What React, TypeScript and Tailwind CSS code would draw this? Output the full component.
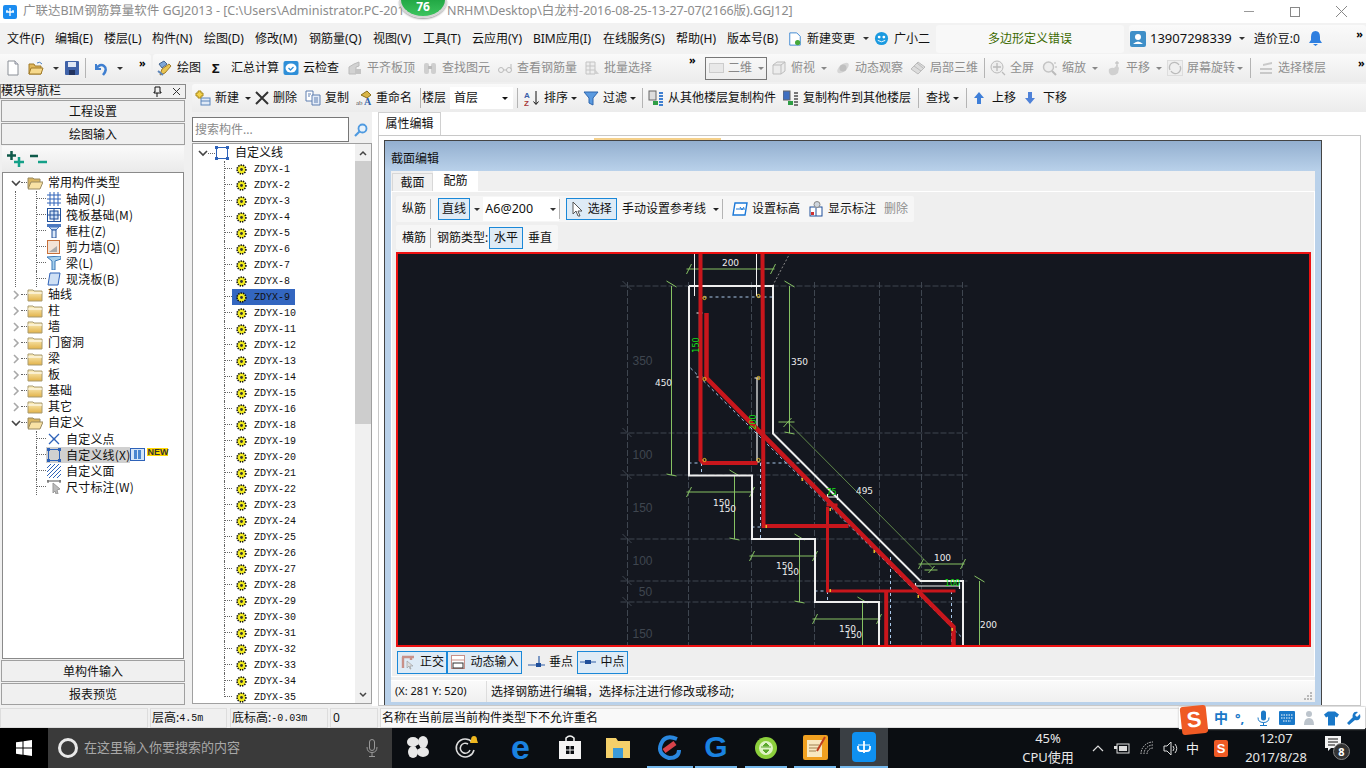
import React from 'react';

const cx = (...a: (string | false | undefined)[]) => a.filter(Boolean).join(' ');

const Svg = ({ c = 'w-4 h-4', v = '0 0 16 16', children }: { c?: string; v?: string; children?: React.ReactNode }) => (
  <svg viewBox={v} className={cx('shrink-0', c)}>{children}</svg>
);

const Caret = ({ c = 'text-[#333]' }: { c?: string }) => (
  <svg viewBox="0 0 6 3" className={cx('w-[6px] h-[3px] shrink-0', c)}><path d="M0 0h6L3 3z" fill="currentColor" /></svg>
);

const More = () => <span className="text-[11px] font-bold leading-none text-black tracking-[-1px]">»</span>;

const Sep = ({ w = 'w-[8px]' }: { w?: string }) => (
  <div className={cx('h-full flex items-center shrink-0', w)}><div className="w-px h-[20px] bg-[#b4b4b4]" /></div>
);

const Tool = ({ w, icon, label, gray, caret, caretGap = 'ml-[6px]' }: { w: string; icon?: React.ReactNode; label?: string; gray?: boolean; caret?: boolean; caretGap?: string }) => (
  <div className={cx('flex items-center h-full shrink-0 whitespace-nowrap', w, gray ? 'text-[#8e8e8e]' : 'text-[#111]')}>
    {icon}
    {label && <span className={icon ? 'ml-[4px]' : ''}>{label}</span>}
    {caret && <span className={caretGap}><Caret c={gray ? 'text-[#888]' : 'text-[#222]'} /></span>}
  </div>
);

/* ---------- icons ---------- */
const IcoNewFile = () => <Svg><path d="M3 1h7l3 3v11H3z" fill="#fff" stroke="#8a8f96" /><path d="M10 1v3h3" fill="#dde" stroke="#8a8f96" /></Svg>;
const IcoOpen = () => <Svg><path d="M1 4h5l1 2h6v8H1z" fill="#e0b75a" stroke="#a07a28" /><path d="M3 8h12l-2 6H1z" fill="#f6d98c" stroke="#a07a28" /><path d="M9 3q3-2 5 1" fill="none" stroke="#4a7fc0" /></Svg>;
const IcoSave = () => <Svg><rect x="1" y="1" width="14" height="14" fill="#3f62a8" rx="1" /><rect x="4" y="2" width="8" height="5" fill="#dfe7f5" /><rect x="5" y="10" width="6" height="5" fill="#22335f" /></Svg>;
const IcoUndo = () => <Svg><path d="M3 4v5h5" fill="none" stroke="#3f7fd0" strokeWidth="2" /><path d="M3 9q4-6 8-3t-1 9" fill="none" stroke="#3f7fd0" strokeWidth="2.5" /></Svg>;
const IcoDraw = () => <Svg><path d="M2 4l5-3 3 3-5 4z" fill="#7fa7d8" stroke="#46658f" /><path d="M5 9l7-5 2 2-6 7-5 2z" fill="#e9c552" stroke="#a07a28" /><path d="M1 11l5 4" stroke="#5f86b8" strokeWidth="2" /></Svg>;
const IcoCloud = () => <Svg><rect x="0.5" y="1" width="15" height="14" rx="2" fill="#2f8fd8" /><ellipse cx="8" cy="8" rx="5.5" ry="4.5" fill="#fff" /><path d="M5.5 8l2 2 3-3" fill="none" stroke="#2f8fd8" strokeWidth="1.3" /></Svg>;
const IcoGrayBoxes = () => <Svg><path d="M2 14V7l5-3 5-2v4l-3 1v7z" fill="#d2d2d2" stroke="#bbb" /><rect x="8" y="9" width="6" height="5" fill="#c4c4c4" /></Svg>;
const IcoBinoc = () => <Svg><rect x="2" y="3" width="5" height="11" rx="2" fill="#cfcfcf" /><rect x="9" y="3" width="5" height="11" rx="2" fill="#cfcfcf" /><rect x="6" y="6" width="4" height="3" fill="#bbb" /></Svg>;
const IcoGlasses = () => <Svg><circle cx="4" cy="10" r="2.5" fill="none" stroke="#bbb" /><circle cx="12" cy="10" r="2.5" fill="none" stroke="#bbb" /><path d="M6.5 10h3M14 9V4" stroke="#bbb" /></Svg>;
const IcoBatch = () => <Svg><path d="M2 2h9v12H2zM2 6h9M2 10h9M6 2v12" fill="#eee" stroke="#c4c4c4" /><path d="M10 8l5 6h-4z" fill="#d0d0d0" /></Svg>;
const IcoCube = () => <Svg><path d="M2 5l4-3h8v9l-4 3H2z" fill="#ececec" stroke="#bdbdbd" /><path d="M2 5h8v9M10 5l4-3" fill="none" stroke="#bdbdbd" /></Svg>;
const IcoOrbit = () => <Svg><ellipse cx="8" cy="8" rx="7" ry="3.5" transform="rotate(-40 8 8)" fill="#d6d6d6" /><circle cx="8" cy="8" r="3.5" fill="#c0c0c0" /></Svg>;
const IcoBox3 = () => <Svg><path d="M1 9l7-7 7 5-7 7z" fill="#dcdcdc" stroke="#bbb" /><path d="M4 6l7 5M7 3l6 5" stroke="#bbb" /></Svg>;
const IcoZoomFit = () => <Svg><circle cx="7" cy="7" r="6" fill="#eee" stroke="#bbb" /><path d="M7 3v8M3 7h8M12 12l3 3" stroke="#bbb" strokeWidth="1.3" /></Svg>;
const IcoZoom = () => <Svg><circle cx="6.5" cy="7" r="5" fill="#eee" stroke="#c4c4c4" strokeWidth="1.5" /><path d="M10 11l4 4" stroke="#bbb" strokeWidth="2" /><circle cx="13" cy="3" r="1" fill="#ccc" /><circle cx="14" cy="7" r="1" fill="#ccc" /></Svg>;
const IcoHand = () => <Svg><path d="M3 9q3-2 5-1l3-3 2 3-1 5q-3 3-7 2-3-2-2-6z" fill="#d0d0d0" /><path d="M11 1v5M9 3h4" stroke="#bbb" /></Svg>;
const IcoRotate = () => <Svg><rect x="0.5" y="0.5" width="15" height="15" fill="#efefef" stroke="#ddd" /><path d="M3 10a5 5 0 0 1 9-5M13 6a5 5 0 0 1-9 5" fill="none" stroke="#bbb" strokeWidth="1.4" /></Svg>;
const IcoFloors = () => <Svg><path d="M5 4l9-2v2l-9 2zM2 8h12v2H2zM2 12h12v2H2z" fill="#c9c9c9" /></Svg>;
const IcoNewPlus = () => <Svg><rect x="6" y="8" width="9" height="7" fill="#dfe9f6" stroke="#5d86bb" /><path d="M6 11h9" stroke="#5d86bb" /><path d="M3 1h3v2h2v3H6v2H3V6H1V3h2z" fill="#f4d24a" stroke="#a8881a" /></Svg>;
const IcoCopy = () => <Svg><path d="M1 1h7v10H1z" fill="#fff" stroke="#5f7fb0" /><path d="M7 5h8v10H7z" fill="#e4ecf8" stroke="#5f7fb0" /><path d="M9 8h4M9 10h4M9 12h4M3 4h3M3 6h2" stroke="#5f7fb0" /></Svg>;
const IcoRename = () => <Svg><path d="M5 5l6-4 4 4-4 3z" fill="#d9b648" stroke="#8a6f1a" /><text x="0" y="15" fontSize="7" fill="#555" fontFamily="Liberation Serif">ab</text><text x="8" y="15" fontSize="10" fontWeight="700" fill="#2f5fa8" fontFamily="Liberation Serif">A</text></Svg>;
const IcoSort = () => <Svg><text x="0" y="7.5" fontSize="8" fontWeight="700" fill="#3a5fa8" fontFamily="Liberation Sans">A</text><text x="0" y="15.5" fontSize="8" fontWeight="700" fill="#a83a3a" fontFamily="Liberation Sans">Z</text><path d="M12 1v13M9.5 11.5l2.5 3 2.5-3" fill="none" stroke="#111" /></Svg>;
const IcoFilter = () => <Svg><path d="M1 2h14L10 8v7l-4-2V8z" fill="#5a9ae0" stroke="#2f66ad" /></Svg>;
const IcoCopyFrom = ({ flip }: { flip?: boolean }) => <Svg><rect x={flip ? 0 : 1} y="1" width="7" height="9" fill={flip ? '#3f6fc0' : '#ddd'} stroke="#666" /><rect x="5" y="11" width="5" height="4" fill="#2f9e45" /><path d="M11 3h4M11 6h4M11 9h4M11 12h4M11 15h4" stroke={flip ? '#777' : '#3f7fd0'} strokeWidth="2" /></Svg>;
const IcoUp = () => <Svg c="w-[10px] h-3" v="0 0 10 12"><path d="M5 0l5 6H7v6H3V6H0z" fill="#3f7fd8" /></Svg>;
const IcoDown = () => <Svg c="w-[10px] h-3" v="0 0 10 12"><path d="M5 12L0 6h3V0h4v6h3z" fill="#4f82d8" /></Svg>;
const IcoX = () => <Svg c="w-[14px] h-[14px]" v="0 0 14 14"><path d="M1 1l12 12M13 1L1 13" stroke="#333" strokeWidth="2" /></Svg>;
const IcoFolder = ({ open }: { open?: boolean }) => (
  <Svg c="w-4 h-[14px]" v="0 0 16 14">
    {open ? (
      <><path d="M1 2h5l1 1h6v9H1z" fill="#d8b560" stroke="#9a8a60" /><path d="M4 6h12l-3 7H1z" fill="#f8e2a4" stroke="#9a8a60" /></>
    ) : (
      <><path d="M1 2h5l1 1h8v10H1z" fill="url(#fg)" stroke="#a89a70" /><path d="M1 5h14" stroke="#fff" /></>
    )}
  </Svg>
);
const IcoGear = () => (
  <Svg c="w-[11px] h-[11px]" v="0 0 11 11">
    <circle cx="5.5" cy="5.5" r="4.4" fill="#f4ee20" stroke="#111" strokeWidth="1.6" strokeDasharray="1.4 1" />
    <circle cx="5.5" cy="5.5" r="1.4" fill="#333" />
  </Svg>
);
const IcoSquare = () => (
  <Svg c="w-[14px] h-[14px]" v="0 0 14 14">
    <rect x="1.5" y="1.5" width="11" height="11" fill="none" stroke="#2e62b8" />
    <path d="M0 0h3v3H0zM11 0h3v3h-3zM0 11h3v3H0zM11 11h3v3h-3z" fill="#2e62b8" />
  </Svg>
);
const Chev = ({ open }: { open?: boolean }) => (
  <svg viewBox="0 0 10 10" className="w-[10px] h-[10px] shrink-0">
    {open ? <path d="M1 3l4 4 4-4" fill="none" stroke="#444" strokeWidth="1.6" /> : <path d="M3 1l4 4-4 4" fill="none" stroke="#a8a8a8" strokeWidth="1.6" />}
  </svg>
);
const KIcons: Record<string, React.ReactNode> = {
  grid: <Svg c="w-[14px] h-[14px]" v="0 0 14 14"><path d="M0 3h14M0 7h14M0 11h14M3 0v14M7 0v14M11 0v14" stroke="#2e62b8" /></Svg>,
  raft: <Svg c="w-[14px] h-[14px]" v="0 0 14 14"><rect x=".5" y=".5" width="13" height="13" fill="none" stroke="#1f4f9a" /><rect x="3" y="3" width="8" height="8" fill="#cfe0f5" stroke="#1f4f9a" /><path d="M7 0v14M0 7h14" stroke="#1f4f9a" /></Svg>,
  col: <Svg c="w-[14px] h-[14px]" v="0 0 14 14"><path d="M0 0h14v3H0z" fill="#4a78c0" /><path d="M2 3h10L9 6H5z" fill="#cfe0f5" stroke="#4a78c0" /><rect x="5" y="6" width="4" height="8" fill="#dbe8f8" stroke="#1f4f9a" /></Svg>,
  wall: <Svg c="w-[14px] h-[14px]" v="0 0 14 14"><rect x=".5" y=".5" width="12" height="13" fill="#f3e3d6" stroke="#c8703a" /><path d="M2 12l8-6v6z" fill="#aaa" /></Svg>,
  beam: <Svg c="w-[14px] h-[14px]" v="0 0 14 14"><path d="M0 1l14-1v3L8 5v9H5V5z" fill="#a8d0ec" stroke="#3a78b8" /></Svg>,
  slab: <Svg c="w-[14px] h-[14px]" v="0 0 14 14"><path d="M3 1h10l-2 12H1z" fill="#cfe0f5" stroke="#2e62b8" /></Svg>,
  point: <Svg c="w-[14px] h-[14px]" v="0 0 14 14"><path d="M2 2l10 10M12 2L2 12" stroke="#2e62b8" strokeWidth="1.3" /><circle cx="7" cy="7" r="1.3" fill="#2e62b8" /></Svg>,
  line: <IcoSquare />,
  area: <Svg c="w-[14px] h-[14px]" v="0 0 14 14"><path d="M0 4l4-4M0 8l8-8M0 12L12 0M2 14L14 2M6 14l8-8M10 14l4-4" stroke="#2e62b8" /></Svg>,
  dim: <Svg c="w-[14px] h-[14px]" v="0 0 14 14"><path d="M0 1h14M1 0v3M13 0v3" stroke="#555" /><path d="M6 3l7 6-3 1 1 4-2 0-1-3-2 2z" fill="#bbb" stroke="#999" /></Svg>,
};

const PageRow = ({ last, icon, label, sel, extra }: { last?: boolean; icon: string; label: string; sel?: boolean; extra?: React.ReactNode }) => (
  <div className="flex h-4 items-center whitespace-nowrap">
    <div className={cx('w-[10px] h-4 ml-[33px] border-l border-dotted border-[#666] shrink-0', last && 'h-2 self-start')}>
      <div className="h-2 border-b border-dotted border-[#666]" />
    </div>
    <div className={cx('flex items-center h-4 pl-px', sel && 'bg-[#d0d0d0]')}>
      {KIcons[icon]}
      <span className="ml-[5px] text-[12px] tracking-[0.2px] font-['Noto_Sans_CJK_SC','Liberation_Mono',monospace]">{label}</span>
    </div>
    {extra}
  </div>
);

const Folder = ({ label, open }: { label: string; open?: boolean }) => (
  <div className="flex h-4 items-center whitespace-nowrap">
    <div className="w-[10px] ml-[8px] flex justify-center"><Chev open={open} /></div>
    <div className="w-[6px] border-b border-dotted border-[#666]" />
    <IcoFolder open={open} />
    <span className="ml-[5px] text-[12px]">{label}</span>
  </div>
);

const NavBtn = ({ label }: { label: string }) => (
  <div className="h-[22px] mx-[1px] mb-px pt-[2px] border border-[#a0a0a0] bg-[#f0f0f0] flex items-center justify-center text-[12px] text-[#111]">{label}</div>
);

const zdyx = [1, 2, 3, 4, 5, 6, 7, 8, 9, 10, 11, 12, 13, 14, 15, 16, 18, 19, 20, 21, 22, 23, 24, 25, 26, 27, 28, 29, 30, 31, 32, 33, 34, 35];

const menus: [string, string][] = [
  ['文件(F)', 'w-[48px]'], ['编辑(E)', 'w-[49px]'], ['楼层(L)', 'w-[48px]'], ['构件(N)', 'w-[52px]'], ['绘图(D)', 'w-[51px]'],
  ['修改(M)', 'w-[54px]'], ['钢筋量(Q)', 'w-[64px]'], ['视图(V)', 'w-[50px]'], ['工具(T)', 'w-[49px]'], ['云应用(Y)', 'w-[61px]'],
  ['BIM应用(I)', 'w-[70px]'], ['在线服务(S)', 'w-[73px]'], ['帮助(H)', 'w-[51px]'], ['版本号(B)', 'w-[61px]'],
];

/* ---------- section drawing ---------- */
const gridH = [286, 433, 475, 539, 581, 602];
const gridV = [627, 688, 751, 814, 879, 921, 962];
const gridLabels: [number, number, string][] = [[642, 365, '350'], [642, 459, '100'], [642, 512, '150'], [642, 565, '100'], [645, 596, '50'], [642, 638, '150']];
// x1 y1 x2 y2
const dimsH = [[688, 269, 772, 269], [688, 492, 751, 492], [751, 556, 814, 556], [814, 619, 878, 619], [920, 564, 962, 564]];
const dimsV = [[671, 286, 671, 475], [789, 286, 789, 433], [734, 475, 734, 539], [799, 539, 799, 602], [862, 602, 862, 647], [979, 581, 979, 647]];
const blueDash = [[703, 297, 772, 297], [690, 368, 962, 638], [688, 463, 800, 463], [701, 463, 701, 475], [760, 463, 760, 539], [751, 527, 763, 527], [814, 591, 827, 591], [827, 591, 827, 602], [890, 557, 890, 647], [951, 591, 951, 647], [763, 527, 785, 527]];
const whiteText: [number, number, string][] = [
  [730, 266, '200'], [663, 386, '450'], [799, 365, '350'], [864, 494, '495'], [721, 506, '150'], [727, 512, '150'],
  [784, 569, '150'], [790, 575, '150'], [847, 632, '150'], [853, 638, '150'], [942, 561, '100'], [988, 628, '200'],
];
const yellowDots: [number, number][] = [[704, 298], [758, 296], [704, 379], [758, 378], [704, 460], [758, 460]];
const yellowTicks: [number, number][] = [[801, 478], [829, 508], [873, 550], [917, 595], [951, 628], [765, 525], [829, 589]];

const SectionDrawing = () => (
  <svg viewBox="398 254 910 391" className="block w-full h-full">
    {gridH.map((y) => (
      <g key={y}>
        <line x1={620} y1={y} x2={967} y2={y} stroke="#3f4650" strokeDasharray="6 2" />
        <line x1={622} y1={y - 5} x2={631} y2={y + 4} stroke="#3f4650" />
      </g>
    ))}
    {gridV.map((x) => <line key={x} x1={x} y1={282} x2={x} y2={647} stroke="#3f4650" strokeDasharray="6 2" />)}
    {gridLabels.map(([x, y, t], i) => <text key={i} x={x} y={y} fontSize="12" fill="#3f464f" textAnchor="middle" fontFamily="Liberation Sans">{t}</text>)}
    <line x1={772} y1={286} x2={789} y2={254} stroke="#888" strokeDasharray="2 2" />
    {blueDash.map((d, i) => <line key={i} x1={d[0]} y1={d[1]} x2={d[2]} y2={d[3]} stroke="#a9c8ea" strokeDasharray="3 3" />)}
    {dimsH.map((d, i) => (
      <g key={i} stroke="#86c263">
        <line x1={d[0] - 2} y1={d[1]} x2={d[2] + 2} y2={d[3]} />
        <line x1={d[0] - 2} y1={d[1] + 5} x2={d[0] + 3} y2={d[1] - 5} />
        <line x1={d[2] - 2} y1={d[1] + 5} x2={d[2] + 3} y2={d[1] - 5} />
      </g>
    ))}
    {dimsV.map((d, i) => (
      <g key={i} stroke="#86c263">
        <line x1={d[0]} y1={d[1]} x2={d[2]} y2={d[3]} />
        <line x1={d[0] - 5} y1={d[1] - 5} x2={d[0] + 5} y2={d[1] + 1} />
        <line x1={d[0] - 5} y1={d[3] - 1} x2={d[0] + 5} y2={d[3] + 1} />
      </g>
    ))}
    <line x1={787} y1={422} x2={932} y2={568} stroke="#7fb75c" strokeWidth="0.7" />
    <path d="M778 422h16M783 427l8-9M924 570h13M928 573l6-7" stroke="#86c263" />

    <polyline points="688.5,286 772.5,286 772.5,433.5 920,581 962.5,581 962.5,647" fill="none" stroke="#eeeeee" strokeWidth="2" />
    <polyline points="688.5,286 688.5,475.5 751.5,475.5 751.5,539 814.5,539 814.5,602 878.5,602 878.5,647" fill="none" stroke="#eeeeee" strokeWidth="2" />
    <path d="M694 254v42M756 254v42" stroke="#f2f2f2" />
    <path d="M699 313v64M696 313h6M696 377h6M756.5 378v84M754 378h5M754 462h5M827 497h10M827 494v6M837 494v6M915 586h44M915 583v6M959 583v6" stroke="#f4f4f4" strokeWidth="1.2" fill="none" />

    <g fill="none" stroke="#c8161c" strokeWidth="4">
      <polyline points="700,254 700,460 703,463 757,463" />
      <polyline points="762,254 763,526 848,526" />
      <polyline points="706,313 706,378 953,627 953,647" strokeWidth="4.5" />
      <polyline points="827,507 827,591 955,591" strokeWidth="3" />
      <line x1={826} y1={505} x2={837} y2={505} strokeWidth="3" />
      <line x1={885.7} y1={592} x2={885.7} y2={647} />
    </g>
    {yellowDots.map(([x, y], i) => <circle key={i} cx={x} cy={y} r={1.6} fill="none" stroke="#e4bc2a" />)}
    {yellowTicks.map(([x, y], i) => <rect key={i} x={x} y={y} width={1.5} height={3} fill="#e4bc2a" />)}

    {whiteText.map(([x, y, t], i) => <text key={i} x={x} y={y} fontSize="9" fill="#ececec" textAnchor="middle" fontFamily="DejaVu Sans">{t}</text>)}
    <text x={831} y={495} fontSize="8" fill="#16e016" textAnchor="middle" fontFamily="DejaVu Sans">75</text>
    <text x={952} y={586} fontSize="8" fill="#16e016" textAnchor="middle" fontFamily="DejaVu Sans">100</text>
    <text fontSize="8" fill="#16e016" textAnchor="middle" fontFamily="DejaVu Sans" transform="translate(698 345) rotate(-90)">150</text>
    <text fontSize="8" fill="#16e016" textAnchor="middle" fontFamily="DejaVu Sans" transform="translate(755 422) rotate(-90)">200</text>
  </svg>
);

const HiBtn = ({ w, children }: { w: string; children: React.ReactNode }) => (
  <div className={cx('h-[22px] border border-[#1a88d8] bg-[#deebf6] flex items-center justify-center shrink-0 whitespace-nowrap', w)}>{children}</div>
);

const TaskSlot = ({ w = 'w-[48px]', on, active, children }: { w?: string; on?: boolean; active?: boolean; children: React.ReactNode }) => (
  <div className={cx('h-full flex items-center justify-center shrink-0 border-b-2', w, on ? 'border-[#76b9ed]' : 'border-transparent', active && 'bg-[#3a3f44]')}>{children}</div>
);

export default function App() {
  return (
    <div className="w-[1366px] h-[768px] overflow-hidden flex flex-col bg-[#f0f0f0] text-[12px] text-[#111] font-['Noto_Sans','Noto_Sans_CJK_SC',sans-serif]">
      <svg width="0" height="0" className="block h-0">
        <defs>
          <linearGradient id="fg" x1="0" y1="0" x2="0" y2="1"><stop offset="0" stopColor="#fdf2c4" /><stop offset="1" stopColor="#e2b248" /></linearGradient>
        </defs>
      </svg>

      {/* title bar */}
      <div className="h-[23px] bg-white flex items-center relative shrink-0">
        <div className="w-[14px] h-[14px] ml-[3px] mr-[6px] rounded-[2px] bg-[#1b8cf0] flex items-center justify-center">
          <Svg c="w-[10px] h-[10px]" v="0 0 10 10"><path d="M5 1v8M1 5h8M2 3v2M8 3v2" stroke="#fff" strokeWidth="1.3" fill="none" /></Svg>
        </div>
        <span className="w-[424px] shrink-0 text-[#8c8c8c] text-[12.5px] whitespace-nowrap">广联达BIM钢筋算量软件 GGJ2013 - [C:\Users\Administrator.PC-201</span>
        <span className="text-[#8c8c8c] text-[12.5px] tracking-[-0.08px] whitespace-nowrap">NRHM\Desktop\白龙村-2016-08-25-13-27-07(2166版).GGJ12]</span>
        {/* score badge over the title */}
        <div className="absolute left-[399px] top-0 w-[48px] h-[18px] rounded-b-[24px_18px] bg-linear-to-b from-[#22a845] to-[#3cc45e] border-2 border-t-0 border-[#d4d4d4] shadow-[0_1px_2px_#999] flex items-center justify-center text-white font-bold text-[12px] leading-none pb-[3px]">76</div>
        <div className="ml-auto mr-[2px] flex items-center h-full text-[#777]">
          <div className="w-[46px] flex justify-center"><div className="w-[10px] h-px bg-[#999]" /></div>
          <div className="w-[46px] flex justify-center"><div className="w-[10px] h-[10px] border border-[#888] bg-white" /></div>
          <div className="w-[46px] flex justify-center"><Svg c="w-[11px] h-[11px]" v="0 0 11 11"><path d="M0 0l11 11M11 0L0 11" stroke="#888" /></Svg></div>
        </div>
      </div>

      {/* menu bar */}
      <div className="h-[31px] flex items-center pl-[7px] shrink-0 bg-[#f2f2f2]">
        {menus.map(([m, w]) => <div key={m} className={cx('shrink-0 whitespace-nowrap', w)}>{m}</div>)}
        <div className="w-[86px] flex items-center">
          <Svg c="w-[14px] h-4"><path d="M2 1h8l4 4v10H2z" fill="#fff" stroke="#2f7fd0" /><circle cx="11" cy="12" r="3" fill="#47a83c" /></Svg>
          <span className="ml-[5px]">新建变更</span>
          <span className="ml-[8px]"><Caret /></span>
        </div>
        <div className="w-[62px] flex items-center">
          <Svg c="w-[15px] h-[15px]"><circle cx="8" cy="8" r="7" fill="#1b9ae0" /><circle cx="5.5" cy="6.5" r="1.5" fill="#fff" /><circle cx="10.5" cy="6.5" r="1.5" fill="#fff" /><path d="M4 10q4 3 8 0" stroke="#fff" fill="none" /></Svg>
          <span className="ml-[5px] whitespace-nowrap">广小二</span>
        </div>
        <div className="w-[188px] h-[28px] bg-[#f8f8f8] rounded-[3px] flex items-center justify-center text-[#3c6a00]">多边形定义错误</div>
        <div className="ml-[5px] flex-1 h-[28px] bg-linear-to-b from-[#fafafa] to-[#f0f0f0] rounded-[3px] flex items-center pl-[1px] pr-[4px]">
          <Svg c="w-4 h-4"><rect width="16" height="16" rx="2" fill="#3f8fc8" /><circle cx="8" cy="6" r="3" fill="#fff" /><path d="M3 13q5-5 10 0z" fill="#fff" /></Svg>
          <span className="ml-[4px] text-[13px]">13907298339</span>
          <span className="ml-[7px]"><Caret /></span>
          <span className="ml-[9px] whitespace-nowrap">造价豆:0</span>
          <Svg c="w-[13px] h-[15px] ml-[9px]" v="0 0 13 15"><path d="M6.5 0q4.5 0 4.5 6v3l2 3H0l2-3V6q0-6 4.5-6z" fill="#2f7fe0" /><path d="M4 13h5l-2.5 2z" fill="#2f7fe0" /></Svg>
          <span className="ml-auto self-start"><More /></span>
        </div>
      </div>

      {/* main toolbar */}
      <div className="h-[30px] flex shrink-0 pb-[2px]">
        <div className="w-[151px] h-full flex items-center pl-[5px] bg-linear-to-b from-[#fafafa] to-[#ececec] rounded-r-[3px]">
          <Tool w="w-[23px]" icon={<IcoNewFile />} />
          <Tool w="w-[25px]" icon={<IcoOpen />} />
          <Tool w="w-[11px]" icon={<Caret />} />
          <Tool w="w-[21px]" icon={<IcoSave />} />
          <Sep w="w-[8px]" />
          <Tool w="w-[24px]" icon={<IcoUndo />} />
          <Tool w="w-[22px]" icon={<Caret />} />
          <span className="self-start"><More /></span>
        </div>
        <div className="ml-[2px] flex-1 h-full flex items-center pl-[4px] bg-linear-to-b from-[#fafafa] to-[#ececec] rounded-l-[3px]">
          <Tool w="w-[54px]" icon={<IcoDraw />} label="绘图" />
          <Tool w="w-[72px]" icon={<span className="w-[11px] ml-[1px] mr-[4px] font-bold text-[13px] leading-none">Σ</span>} label="汇总计算" />
          <Tool w="w-[64px]" icon={<IcoCloud />} label="云检查" />
          <Tool w="w-[75px]" gray icon={<IcoGrayBoxes />} label="平齐板顶" />
          <Tool w="w-[75px]" gray icon={<IcoBinoc />} label="查找图元" />
          <Tool w="w-[87px]" gray icon={<IcoGlasses />} label="查看钢筋量" />
          <Tool w="w-[105px]" gray icon={<IcoBatch />} label="批量选择" />
          <div className="w-[16px] h-full flex items-start"><More /></div>
          <div className="w-[62px] h-[23px] border border-[#777] flex items-center pl-[3px] mr-[4px] text-[#888] shrink-0">
            <div className="w-[15px] h-[10px] border border-[#ccc] bg-[#e8e8e8]" />
            <span className="ml-[4px]">二维</span>
            <span className="ml-[6px]"><Caret c="text-[#888]" /></span>
          </div>
          <Tool w="w-[64px]" gray caret icon={<IcoCube />} label="俯视" />
          <Tool w="w-[75px]" gray icon={<IcoOrbit />} label="动态观察" />
          <Tool w="w-[74px]" gray icon={<IcoBox3 />} label="局部三维" />
          <Sep w="w-[6px]" />
          <Tool w="w-[52px]" gray icon={<IcoZoomFit />} label="全屏" />
          <Tool w="w-[64px]" gray caret icon={<IcoZoom />} label="缩放" />
          <Tool w="w-[61px]" gray caret icon={<IcoHand />} label="平移" />
          <Tool w="w-[83px]" gray caret caretGap="ml-[2px]" icon={<IcoRotate />} label="屏幕旋转" />
          <Sep w="w-[8px]" />
          <Tool w="w-[100px]" gray icon={<IcoFloors />} label="选择楼层" />
          <span className="self-start"><More /></span>
        </div>
      </div>

      {/* main area */}
      <div className="flex-1 flex min-h-0">
        {/* module navigator */}
        <div className="w-[186px] shrink-0 flex flex-col">
          <div className="h-[15px] mb-px border border-[#8a8a8a] flex items-center text-[12px] leading-none bg-[#f0f0f0] pr-[2px]">
            <span className="flex-1">模块导航栏</span>
            <Svg c="w-[9px] h-[11px] mr-[10px]" v="0 0 9 11"><path d="M2 1h5v5h1v1H1V6h1zM4 7v4" stroke="#111" fill="none" /></Svg>
            <Svg c="w-[9px] h-[9px] mr-[2px]" v="0 0 9 9"><path d="M1 1l7 7M8 1L1 8" stroke="#333" /></Svg>
          </div>
          <NavBtn label="工程设置" />
          <NavBtn label="绘图输入" />
          <div className="h-[26px] mx-[2px] bg-linear-to-b from-[#fafafa] to-[#eaeaea] flex items-center pl-[5px] gap-[6px]">
            <Svg c="w-[17px] h-4" v="0 0 17 16"><path d="M4.500 0v9M0 4.500h9" stroke="#0f5a4a" strokeWidth="2.500" /><path d="M12 6v10M7 11h10" stroke="#14a088" strokeWidth="2.500" /></Svg>
            <Svg c="w-[17px] h-4" v="0 0 17 16"><path d="M0 5h8" stroke="#0f5a4a" strokeWidth="2.500" /><path d="M8 11h9" stroke="#14a088" strokeWidth="2.500" /></Svg>
          </div>
          <div className="h-[488px] mx-[2px] mb-px border border-[#8a8a8a] bg-white pt-[2px] overflow-hidden">
            <Folder label="常用构件类型" open />
            <div className="relative">
              {/* long dotted trunk of the open folder */}
              <div className="absolute left-[12px] top-0 h-full border-l border-dotted border-[#666]" />
              <PageRow icon="grid" label="轴网(J)" />
              <PageRow icon="raft" label="筏板基础(M)" />
              <PageRow icon="col" label="框柱(Z)" />
              <PageRow icon="wall" label="剪力墙(Q)" />
              <PageRow icon="beam" label="梁(L)" />
              <PageRow icon="slab" label="现浇板(B)" last />
            </div>
            {['轴线', '柱', '墙', '门窗洞', '梁', '板', '基础', '其它'].map((f) => <Folder key={f} label={f} />)}
            <Folder label="自定义" open />
            <PageRow icon="point" label="自定义点" />
            <PageRow
              icon="line"
              label="自定义线(X)"
              sel
              extra={
                <>
                  <div className="w-[15px] h-[13px] border border-[#2e62b8] bg-[#d6e6f8] flex items-center justify-center gap-px">
                    <div className="w-[3px] h-[9px] bg-[#4a86d0]" /><div className="w-[3px] h-[9px] bg-[#4a86d0]" />
                  </div>
                  <span className="ml-[2px] -mt-[5px] text-[9px] leading-[8px] font-bold bg-[#ffd800] text-[#333] font-['Liberation_Sans',sans-serif]">NEW</span>
                </>
              }
            />
            <PageRow icon="area" label="自定义面" />
            <PageRow icon="dim" label="尺寸标注(W)" last />
          </div>
          <NavBtn label="单构件输入" />
          <NavBtn label="报表预览" />
        </div>

        {/* right of navigator */}
        <div className="ml-[6px] flex-1 flex flex-col min-w-0">
          <div className="h-[28px] shrink-0 flex items-center pl-[3px] bg-linear-to-b from-[#fafafa] to-[#ececec] rounded-tl-[3px]">
            <Tool w="w-[60px]" caret icon={<IcoNewPlus />} label="新建" />
            <Tool w="w-[50px]" icon={<IcoX />} label="删除" />
            <Tool w="w-[51px]" icon={<IcoCopy />} label="复制" />
            <Tool w="w-[64px]" icon={<IcoRename />} label="重命名" />
            <Sep w="w-[2px]" />
            <Tool w="w-[28px]" label="楼层" />
            <div className="w-[63px] h-[22px] mr-[4px] bg-white flex items-center justify-between pl-[4px] pr-[5px] shrink-0"><span>首层</span><Caret c="text-[#111]" /></div>
            <Sep w="w-[7px]" />
            <Tool w="w-[59px]" caret caretGap="ml-[3px]" icon={<IcoSort />} label="排序" />
            <Tool w="w-[59px]" caret caretGap="ml-[3px]" icon={<IcoFilter />} label="过滤" />
            <Sep w="w-[6px]" />
            <Tool w="w-[135px]" icon={<IcoCopyFrom />} label="从其他楼层复制构件" />
            <Tool w="w-[135px]" icon={<IcoCopyFrom flip />} label="复制构件到其他楼层" />
            <Sep w="w-[8px]" />
            <Tool w="w-[40px]" caret caretGap="ml-[3px]" label="查找" />
            <Sep w="w-[8px]" />
            <Tool w="w-[51px]" icon={<span className="mr-[4px]"><IcoUp /></span>} label="上移" />
            <Tool w="w-[51px]" icon={<span className="mr-[4px]"><IcoDown /></span>} label="下移" />
          </div>

          <div className="flex-1 flex min-h-0 bg-white">
            {/* component list */}
            <div className="w-[180px] shrink-0 flex flex-col pt-[5px] bg-[#f0f0f0]">
              <div className="h-[25px] flex shrink-0">
                <div className="w-[157px] border border-[#777] bg-white flex items-center pl-[2px] text-[#8a8a8a]">搜索构件...</div>
                <div className="flex-1 flex items-center justify-center">
                  <Svg c="w-[14px] h-[14px]" v="0 0 14 14"><circle cx="8.5" cy="5.5" r="4" fill="#e8f2fb" stroke="#4f9ae0" strokeWidth="1.8" /><path d="M5.5 8.5L1 13" stroke="#4f9ae0" strokeWidth="2.2" /></Svg>
                </div>
              </div>
              <div className="flex-1 flex mt-px border border-[#a0a0a0] bg-white min-h-0 overflow-hidden">
                <div className="flex-1 pt-[1px] min-w-0">
                  <div className="flex h-4 items-center">
                    <div className="w-[10px] ml-[5px] flex justify-center"><Chev open /></div>
                    <div className="w-[7px] border-b border-dotted border-[#666]" />
                    <IcoSquare />
                    <span className="ml-[6px]">自定义线</span>
                  </div>
                  {zdyx.map((n, i) => (
                    <div key={n} className="flex h-4 items-center whitespace-nowrap font-['Liberation_Mono',monospace] text-[10px]">
                      <div className={cx('w-[8px] ml-[31px] border-l border-dotted border-[#666] shrink-0', i === zdyx.length - 1 ? 'h-2 self-start' : 'h-4')}>
                        <div className="h-2 border-b border-dotted border-[#666]" />
                      </div>
                      <div className={cx('flex items-center h-4 w-[63px] pl-[4px]', n === 9 && 'bg-[#3366c0]')}>
                        <IcoGear />
                        <span className="ml-[7px] text-[#111]">ZDYX-{n}</span>
                      </div>
                    </div>
                  ))}
                </div>
                <div className="w-[16px] shrink-0 bg-[#f0f0f0] flex flex-col items-center">
                  <div className="h-[17px] flex items-center"><Svg c="w-2 h-[6px]" v="0 0 8 6"><path d="M1 5l3-3 3 3" stroke="#444" strokeWidth="1.5" fill="none" /></Svg></div>
                  <div className="w-full h-[263px] bg-[#cdcdcd]" />
                  <div className="mt-auto h-[17px] flex items-center"><Svg c="w-2 h-[6px]" v="0 0 8 6"><path d="M1 1l3 3 3-3" stroke="#444" strokeWidth="1.5" fill="none" /></Svg></div>
                </div>
              </div>
              <div className="h-[2px]" />
            </div>

            {/* property panel */}
            <div className="ml-[6px] flex-1 flex flex-col min-w-0 pr-[5px]">
              <div className="h-[23px] shrink-0 flex bg-white">
                <div className="w-[63px] h-full border border-b-0 border-[#d0d0d0] bg-white flex items-center justify-center text-[12px]">属性编辑</div>
              </div>
              <div className="flex-1 min-h-0 border border-[#c8c8c8] bg-white pt-[2px] pl-[5px] pr-[38px] flex flex-col">
                <div className="h-[2px] ml-[210px] w-[127px] bg-[#f5d08a] shrink-0" />
                <div className="flex-1 min-h-0 border-t border-l border-r border-[#444] flex flex-col bg-[#b9d1ea] px-[6px] pb-[3px]">
                  <div className="h-[30px] -mx-[6px] px-[6px] bg-linear-to-b from-[#93afcf] to-[#b9d1ea] flex items-center pt-[6px] shrink-0 text-[12px]">截面编辑</div>
                  <div className="flex-1 min-h-0 flex flex-col bg-[#f0f0f0]">
                    <div className="h-[20px] flex items-end shrink-0 pl-px">
                      <div className="w-[41px] h-[18px] border border-b-0 border-[#d8d8d8] flex items-center justify-center bg-[#f0f0f0]">截面</div>
                      <div className="w-[45px] h-[20px] bg-white flex items-center justify-center">配筋</div>
                    </div>
                    <div className="h-[486px] shrink-0 border border-white bg-[#efefef] flex flex-col pl-[4px] pr-[3px] pt-[4px]">
                      <div className="h-[26px] w-[518px] bg-[#f6f6f6] rounded-[2px] flex items-center pl-[6px] shrink-0">
                        <Tool w="w-[28px]" label="纵筋" />
                        <Sep w="w-[8px]" />
                        <HiBtn w="w-[32px]">直线</HiBtn>
                        <div className="w-[14px] flex justify-center"><Caret /></div>
                        <div className="w-[76px] h-[24px] bg-white flex items-center justify-between pl-[2px] pr-[3px] shrink-0"><span className="text-[12.5px]">A6@200</span><Caret /></div>
                        <Sep w="w-[7px]" />
                        <HiBtn w="w-[51px]">
                          <Svg c="w-[12px] h-4" v="0 0 12 16"><path d="M1 1l9 9-4 0 2 5-2 0-2-5-3 3z" fill="#fff" stroke="#555" /></Svg>
                          <span className="ml-[4px]">选择</span>
                        </HiBtn>
                        <div className="w-[5px]" />
                        <Tool w="w-[100px]" caret caretGap="ml-[7px]" label="手动设置参考线" />
                        <Sep w="w-[10px]" />
                        <Tool w="w-[76px]" icon={<Svg><path d="M3 2h12l-2 12H1z" fill="#fff" stroke="#1a78d8" strokeWidth="1.4" /><path d="M4 8h9M8 6l2 3 2-3" stroke="#1a78d8" fill="none" /></Svg>} label="设置标高" />
                        <Tool w="w-[76px]" icon={<Svg><rect x="2" y="6" width="12" height="9" fill="#fff" stroke="#1f4f9a" /><circle cx="9" cy="3.5" r="3" fill="#cfd6de" stroke="#888" /><rect x="3" y="11" width="3" height="3" fill="#d03030" /><path d="M8 7v8" stroke="#1f4f9a" /></Svg>} label="显示标注" />
                        <Tool w="w-[30px]" gray label="删除" />
                      </div>
                      <div className="h-[25px] w-[162px] mt-[3px] bg-[#f6f6f6] rounded-[2px] flex items-center pl-[6px] shrink-0">
                        <Tool w="w-[28px]" label="横筋" />
                        <Sep w="w-[7px]" />
                        <Tool w="w-[52px]" label="钢筋类型:" />
                        <HiBtn w="w-[34px]">水平</HiBtn>
                        <div className="w-[5px]" />
                        <Tool w="w-[24px]" label="垂直" />
                      </div>
                      <div className="h-[395px] mt-[2px] border-2 border-[#ee1111] bg-[#14171f] shrink-0 overflow-hidden">
                        <SectionDrawing />
                      </div>
                      <div className="h-[24px] mt-[3px] flex items-center shrink-0 pl-px">
                        <HiBtn w="w-[50px] !h-[23px]">
                          <Svg><path d="M2 3h12M3 3v11M11 3v3" stroke="#c89088" strokeWidth="2.4" /><path d="M7 7l6 5-3 0 1 3-1 0-1-3-2 2z" fill="#ddd" stroke="#888" strokeWidth=".5" /></Svg>
                          <span className="ml-[4px]">正交</span>
                        </HiBtn>
                        <HiBtn w="w-[75px] !h-[23px]">
                          <Svg><rect x="1.5" y="1.5" width="13" height="13" fill="#fff" stroke="#c89088" /><path d="M1.5 6h13" stroke="#c89088" /><rect x="3" y="9" width="10" height="5" fill="#fff" stroke="#333" /></Svg>
                          <span className="ml-[4px]">动态输入</span>
                        </HiBtn>
                        <Tool w="w-[55px] pl-[6px]" icon={<Svg c="w-[17px] h-4" v="0 0 17 16"><path d="M0 11h17M11 2v9" stroke="#2f5fa8" strokeWidth="1.2" /><rect x="8" y="9" width="5" height="4" fill="#1f4f9a" /></Svg>} label="垂点" />
                        <HiBtn w="w-[51px] !h-[23px]">
                          <Svg c="w-[16px] h-4"><path d="M0 8h16" stroke="#2f5fa8" /><rect x="5" y="6" width="6" height="4" fill="#1f4f9a" /></Svg>
                          <span className="ml-[4px]">中点</span>
                        </HiBtn>
                      </div>
                    </div>
                    <div className="flex-1 mt-[3px] flex bg-linear-to-b from-[#fafafa] to-[#f0f0f0] min-h-0 border-t border-white">
                      <div className="w-[96px] border-r border-[#ddd] flex items-center pl-[4px] text-[11px] whitespace-nowrap">(X: 281 Y: 520)</div>
                      <div className="flex-1 flex items-center pl-[4px] whitespace-nowrap">选择钢筋进行编辑，选择标注进行修改或移动;</div>
                      <div className="w-[12px] self-end pb-[2px]">
                        <Svg c="w-[9px] h-[9px]" v="0 0 9 9"><path d="M7 1h2v2H7zM4 4h2v2H4zM7 4h2v2H7zM1 7h2v2H1zM4 7h2v2H4zM7 7h2v2H7z" fill="#b8b8b8" /></Svg>
                      </div>
                    </div>
                  </div>
                </div>
              </div>
            </div>
          </div>
        </div>
      </div>

      {/* status bar */}
      <div className="h-[21px] shrink-0 flex items-stretch pt-px mt-px bg-[#f0f0f0] text-[12px]">
        <div className="w-[148px] border border-[#ddd] mr-[2px]" />
        <div className="w-[77px] border border-[#ddd] mr-[3px] flex items-center pl-px whitespace-nowrap">层高:<span className="font-['Liberation_Mono',monospace] text-[10px]">4.5m</span></div>
        <div className="w-[98px] border border-[#ddd] mr-[2px] flex items-center pl-px whitespace-nowrap">底标高:<span className="font-['Liberation_Mono',monospace] text-[10px]">-0.03m</span></div>
        <div className="w-[48px] border border-[#ddd] mr-[2px] flex items-center pl-[2px]">0</div>
        <div className="flex-1 border border-[#ddd] flex items-center pl-px bg-[#f9f9f9] relative">
          名称在当前层当前构件类型下不允许重名
          {/* sogou input bar floats over the status bar */}
          <div className="absolute right-0 -top-[2px] h-[22px] w-[186px] bg-white flex items-center pl-[2px] shadow-[0_0_2px_#bbb]">
            <div className="w-[26px] h-[28px] mt-[3px] rotate-[-6deg] rounded-[3px] bg-[#ef5a24] flex items-center justify-center text-white font-bold text-[22px] leading-none font-['Liberation_Sans',sans-serif]">S</div>
            <span className="ml-[7px] w-[14px] font-bold text-[14px] text-[#1a78c8] leading-none">中</span>
            <span className="ml-[7px] w-[14px] font-bold text-[13px] text-[#1a78c8] leading-none">°,</span>
            <Svg c="w-[13px] h-[17px] ml-[8px]" v="0 0 13 16"><rect x="4" y="0" width="5" height="10" rx="2.500" fill="#1a78c8" /><path d="M1 7q0 5 5.500 5T12 7M6.500 12v3M3 15h7" stroke="#1a78c8" fill="none" /></Svg>
            <Svg c="w-[16px] h-[14px] ml-[9px]" v="0 0 16 14"><rect width="16" height="14" rx="1" fill="#1a78c8" /><path d="M2 4h12M2 7h12M4 10h8" stroke="#fff" strokeDasharray="1.500 1" /></Svg>
            <Svg c="w-[14px] h-[16px] ml-[8px]" v="0 0 14 16"><circle cx="6" cy="4" r="3" fill="#bcc4cc" /><path d="M1 15q0-7 5-7t5 7z" fill="#bcc4cc" /></Svg>
            <Svg c="w-[15px] h-[15px] ml-[7px]" v="0 0 15 14"><path d="M4 0h7l4 3-2 3-2-1v9H4V5L2 6 0 3z" fill="#1a78c8" /></Svg>
            <Svg c="w-[15px] h-[15px] ml-[7px]" v="0 0 15 15"><path d="M14 3l-3 3-2-2 3-3q-4-1-5 2t0 3L1 12l2 2 6-5q3 1 4.500-1t.5-5z" fill="#1a78c8" /></Svg>
          </div>
        </div>
      </div>

      {/* taskbar */}
      <div className="h-[40px] shrink-0 flex items-center bg-[#0b0e12] text-white">
        <div className="w-[48px] h-full flex items-center justify-center bg-black">
          <Svg c="w-[16px] h-[16px]"><path d="M0 2.300l6.500-.9v6.200H0zM7.500 1.300L16 0v7.600H7.500zM0 8.500h6.500v6.200L0 13.800zM7.500 8.500H16V16l-8.500-1.200z" fill="#fff" /></Svg>
        </div>
        <div className="w-[344px] h-full bg-[#3a3a3a] flex items-center pl-[10px] pr-[14px] text-[#a8a8a8] text-[13px]">
          <div className="w-[20px] h-[20px] rounded-full border-[3px] border-[#e8e8e8] mr-[6px]" />
          <span>在这里输入你要搜索的内容</span>
          <Svg c="w-[12px] h-[18px] ml-auto" v="0 0 12 18"><rect x="3.500" y=".5" width="5" height="11" rx="2.500" fill="none" stroke="#999" /><path d="M1 8q0 5.500 5 5.500T11 8M6 13.500V17M3 17.500h6" fill="none" stroke="#999" /></Svg>
        </div>
        <div className="w-[2px]" />
        <TaskSlot><Svg c="w-[24px] h-[24px]" v="0 0 24 24"><g fill="#e8e8e8"><ellipse cx="7" cy="7" rx="6" ry="5" /><ellipse cx="17" cy="7" rx="5" ry="6" /><ellipse cx="7" cy="17" rx="5" ry="6" /><ellipse cx="17" cy="17" rx="6" ry="5" /></g><circle cx="12" cy="12" r="2" fill="#0b0e12" /></Svg></TaskSlot>
        <TaskSlot w="w-[49px]"><Svg c="w-[26px] h-[26px]" v="0 0 26 26"><path d="M18 8a9 9 0 1 0 2 8M14 10a5 5 0 1 0 2 6" fill="none" stroke="#ddd" strokeWidth="1.500" /><path d="M20 2q3 0 3 4l1 3h-8l1-3q0-4 3-4z" fill="#f0b820" /></Svg></TaskSlot>
        <TaskSlot w="w-[59px]"><span className="text-[#1a82e0] font-bold text-[34px] leading-none font-['Liberation_Sans',sans-serif]">e</span></TaskSlot>
        <TaskSlot w="w-[40px]"><Svg c="w-[22px] h-[24px]" v="0 0 22 24"><rect y="6" width="22" height="18" fill="#f4f4f4" /><path d="M7 6V3q4-4 8 0v3" fill="none" stroke="#f4f4f4" strokeWidth="1.500" /><path d="M7 11h3.500v3.500H7zM11.500 11H15v3.500h-3.500zM7 15.500h3.500V19H7zM11.500 15.500H15V19h-3.500z" fill="#0b0e12" /></Svg></TaskSlot>
        <TaskSlot w="w-[56px]"><Svg c="w-[24px] h-[22px]" v="0 0 24 22"><path d="M0 2h10l2 3h12v17H0z" fill="#f4d06a" /><rect x="7" y="12" width="10" height="10" fill="#3a9ad8" /></Svg></TaskSlot>
        <TaskSlot w="w-[46px] mx-px" on><Svg c="w-[26px] h-[26px]" v="0 0 26 26"><path d="M20 5Q8 0 4 10t8 14q10 0 10-8" fill="none" stroke="#2a88e0" strokeWidth="4" /><path d="M7 17l11-8" stroke="#d8434a" strokeWidth="5" /></Svg></TaskSlot>
        <TaskSlot w="w-[42px] mx-px" on><span className="text-[#1a82e0] font-bold text-[30px] leading-none font-['Liberation_Sans',sans-serif]">G</span></TaskSlot>
        <TaskSlot w="w-[42px] mx-[7px]" on><Svg c="w-[24px] h-[26px]" v="0 0 24 26"><circle cx="12" cy="14" r="11" fill="#8ccf3c" /><circle cx="12" cy="14" r="7" fill="#dff3c4" /><path d="M7 13h10M12 9l-3 3h6zM12 19l-3-3h6z" fill="#5aa82c" stroke="#5aa82c" /></Svg></TaskSlot>
        <TaskSlot w="w-[42px]" on><Svg c="w-[25px] h-[25px]" v="0 0 25 25"><rect width="25" height="25" rx="2" fill="#f0a020" /><rect x="4" y="5" width="15" height="17" fill="#f8e8c0" /><path d="M6 10h10M6 13h10M6 16h7" stroke="#a08050" /><path d="M22 2l-8 14" stroke="#c04020" strokeWidth="2" /></Svg></TaskSlot>
        <TaskSlot w="w-[48px] ml-[4px]" on active><div className="w-[24px] h-[30px] rounded-[4px] bg-[#0f90f0] flex items-center justify-center"><Svg c="w-[16px] h-[16px]"><path d="M8 2v12M2 7v2q0 3 3 3h6q3 0 3-3V7" fill="none" stroke="#fff" strokeWidth="1.800" /><path d="M2 6h12" stroke="#fff" strokeWidth="1" /></Svg></div></TaskSlot>
        <div className="w-[94px] ml-[113px] text-center leading-[19px] text-[13px] text-[#e8e8e8] shrink-0">
          <div>45%</div>
          <div className="whitespace-nowrap">CPU使用</div>
        </div>
        <Svg c="w-[12px] h-[7px] -ml-[3px]" v="0 0 12 7"><path d="M1 6l5-5 5 5" fill="none" stroke="#ddd" strokeWidth="1.200" /></Svg>
        <Svg c="w-[16px] h-[11px] ml-[10px]" v="0 0 16 11"><rect x="3" y="1" width="12" height="9" fill="none" stroke="#ddd" /><rect x="5" y="3" width="8" height="5" fill="#ddd" /><path d="M0 3h3v3H0z" fill="#ddd" /></Svg>
        <Svg c="w-[15px] h-[14px] ml-[10px]" v="0 0 15 14"><path d="M1 13a12 12 0 0 1 12-12M4 13a9 9 0 0 1 9-9M7 13a6 6 0 0 1 6-6" fill="none" stroke="#ccc" strokeDasharray="1.500 1" /></Svg>
        <Svg c="w-[15px] h-[15px] ml-[8px]" v="0 0 15 15"><path d="M1 5h3l4-4v13l-4-4H1z" fill="none" stroke="#ddd" /><path d="M10 5q2 2.500 0 5M12 3q3.500 4.500 0 9" fill="none" stroke="#ddd" /></Svg>
        <span className="text-[13px] text-[#f0f0f0] w-[14px] ml-[8px] leading-none">中</span>
        <div className="w-[14px] h-[17px] ml-[14px] rounded-[2px] bg-[#ef5a24] flex items-center justify-center text-white font-bold text-[13px] leading-none font-['Liberation_Sans',sans-serif]">S</div>
        <div className="w-[70px] ml-[13px] text-center leading-[19px] text-[13px] text-[#e8e8e8] shrink-0 whitespace-nowrap">
          <div>12:07</div>
          <div>2017/8/28</div>
        </div>
        <div className="ml-[14px] relative w-[24px] h-[24px] shrink-0">
          <Svg c="w-[16px] h-[16px]"><path d="M0 0h16v12H6l-3 3v-3H0z" fill="#f4f4f4" /><path d="M3 3h10M3 6h10M3 9h7" stroke="#111" /></Svg>
          <div className="absolute left-[8px] top-[7px] w-[17px] h-[17px] rounded-full bg-[#333] border border-[#888] flex items-center justify-center text-[11px] font-bold leading-none">8</div>
        </div>
      </div>
    </div>
  );
}
